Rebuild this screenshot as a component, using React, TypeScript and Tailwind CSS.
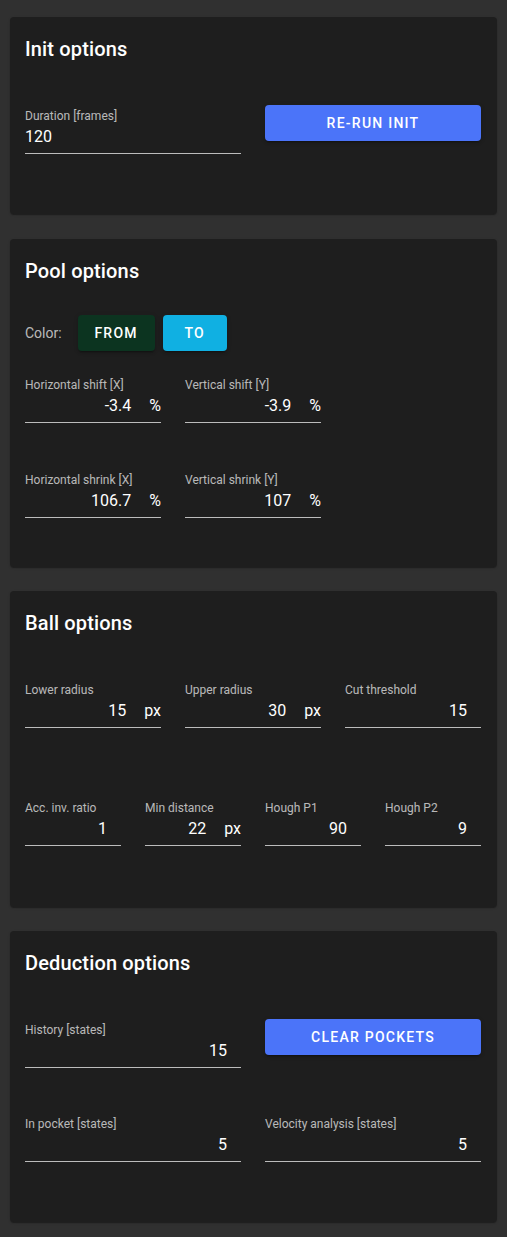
import React from 'react';

type FieldProps = {
  label: string;
  value: string;
  suffix?: string;
  left?: boolean;
  span: string;
  className?: string;
};

const Field = ({ label, value, suffix, left, span, className = '' }: FieldProps) => (
  <div className={`flex flex-col ${span} ${className}`}>
    <span className="whitespace-nowrap text-[12px] leading-[14px] text-white/70">{label}</span>
    <div className="mt-[4px] flex items-center border-b border-white/70 pb-[7px]">
      <span
        className={`h-[19px] flex-1 text-[16px] leading-[19px] text-white ${
          left ? 'text-left' : suffix ? 'text-right' : 'pr-[14px] text-right'
        }`}
      >
        {value}
      </span>
      {suffix && <span className="ml-[18px] text-[16px] leading-[19px] text-white">{suffix}</span>}
    </div>
  </div>
);

const Card = ({ title, className, children }: { title: string; className: string; children: React.ReactNode }) => (
  <div className={`rounded-[4px] bg-[#1e1e1e] pl-[15px] pr-[16px] pt-4 shadow-[0_2px_1px_-1px_rgba(0,0,0,0.2),0_1px_1px_0_rgba(0,0,0,0.14),0_1px_3px_0_rgba(0,0,0,0.12)] ${className}`}>
    <h2 className="text-[20px] font-medium leading-[32px] tracking-[0.15px] text-white">{title}</h2>
    {children}
  </div>
);

const ActionButton = ({ children }: { children: React.ReactNode }) => (
  <button className="col-span-6 flex h-9 items-center justify-center rounded-[4px] bg-[#4b74f9] text-[14px] font-medium uppercase tracking-[1.25px] text-white shadow-[0_3px_1px_-2px_rgba(0,0,0,0.2),0_2px_2px_0_rgba(0,0,0,0.14),0_1px_5px_0_rgba(0,0,0,0.12)]">
    {children}
  </button>
);

export default function App() {
  return (
    <div className="min-h-screen bg-[#303030] px-[10px] pb-[15px] pt-[17px] font-['Roboto',sans-serif]">
      <Card title="Init options" className="h-[197px]">
        <div className="mt-10 grid grid-cols-12 items-start gap-x-6">
          <Field label="Duration [frames]" value="120" left span="col-span-6" className="mt-[4px]" />
          <ActionButton>Re-run init</ActionButton>
        </div>
      </Card>

      <Card title="Pool options" className="mt-[25px] h-[328px]">
        <div className="mt-[28px] flex items-center">
          <span className="text-[14px] text-white/70">Color:</span>
          <button className="ml-4 flex h-9 w-[77px] items-center justify-center rounded-[4px] bg-[#0c3420] text-[14px] font-medium uppercase tracking-[1.25px] text-white shadow-[0_3px_1px_-2px_rgba(0,0,0,0.2),0_2px_2px_0_rgba(0,0,0,0.14),0_1px_5px_0_rgba(0,0,0,0.12)]">
            From
          </button>
          <button className="ml-2 flex h-9 w-[64px] items-center justify-center rounded-[4px] bg-[#10b0e2] text-[14px] font-medium uppercase tracking-[1.25px] text-white shadow-[0_3px_1px_-2px_rgba(0,0,0,0.2),0_2px_2px_0_rgba(0,0,0,0.14),0_1px_5px_0_rgba(0,0,0,0.12)]">
            To
          </button>
        </div>
        <div className="mt-[27px] grid grid-cols-12 gap-x-6 gap-y-[50px]">
          <Field label="Horizontal shift [X]" value="-3.4" suffix="%" span="col-span-4" />
          <Field label="Vertical shift [Y]" value="-3.9" suffix="%" span="col-span-4" />
          <div className="col-span-4" />
          <Field label="Horizontal shrink [X]" value="106.7" suffix="%" span="col-span-4" />
          <Field label="Vertical shrink [Y]" value="107" suffix="%" span="col-span-4" />
        </div>
      </Card>

      <Card title="Ball options" className="mt-6 h-[316px]">
        <div className="mt-[44px] grid grid-cols-12 gap-x-6">
          <Field label="Lower radius" value="15" suffix="px" span="col-span-4" />
          <Field label="Upper radius" value="30" suffix="px" span="col-span-4" />
          <Field label="Cut threshold" value="15" span="col-span-4" />
        </div>
        <div className="mt-[73px] grid grid-cols-12 gap-x-6">
          <Field label="Acc. inv. ratio" value="1" span="col-span-3" />
          <Field label="Min distance" value="22" suffix="px" span="col-span-3" />
          <Field label="Hough P1" value="90" span="col-span-3" />
          <Field label="Hough P2" value="9" span="col-span-3" />
        </div>
      </Card>

      <Card title="Deduction options" className="mt-6 h-[291px]">
        <div className="mt-10 grid grid-cols-12 items-start gap-x-6">
          <Field label="History [states]" value="15" span="col-span-6" className="mt-[4px]" />
          <ActionButton>Clear pockets</ActionButton>
        </div>
        <div className="mt-[49px] grid grid-cols-12 gap-x-6">
          <Field label="In pocket [states]" value="5" span="col-span-6" />
          <Field label="Velocity analysis [states]" value="5" span="col-span-6" />
        </div>
      </Card>
    </div>
  );
}
